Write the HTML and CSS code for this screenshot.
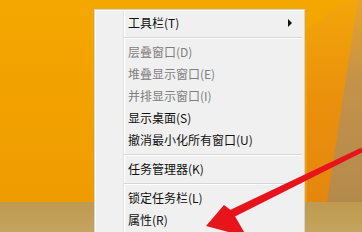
FILE: index.html
```html
<!DOCTYPE html>
<html>
<head>
<meta charset="utf-8">
<link rel="stylesheet" href="styles.css">
</head>
<body>
<div class="desktop">
  <svg class="decor" width="362" height="232" viewBox="0 0 362 232">
    <defs>
      <linearGradient id="dark" x1="0" y1="0" x2="0" y2="1">
        <stop offset="0" stop-color="#f3a60a"/>
        <stop offset="0.5" stop-color="#ea900c"/>
        <stop offset="1" stop-color="#e4870e"/>
      </linearGradient>
      <linearGradient id="tan" x1="0" y1="0" x2="0" y2="1">
        <stop offset="0" stop-color="#e7a228"/>
        <stop offset="0.4" stop-color="#c4924a"/>
        <stop offset="1" stop-color="#b48a4c"/>
      </linearGradient>
      <linearGradient id="bar" x1="0" y1="0" x2="0" y2="1">
        <stop offset="0" stop-color="#bf9a50"/>
        <stop offset="1" stop-color="#c4a45e"/>
      </linearGradient>
    </defs>
    <polygon points="307,30 345,0 362,0 362,202 307,202" fill="url(#dark)"/>
    <polygon points="358,0 362,0 362,202 327,202" fill="url(#tan)"/>
    <rect x="0" y="202" width="362" height="30" fill="url(#bar)"/>
  </svg>

  <div class="menu">
    <div class="item"><span>工具栏(T)</span><span class="sub"></span></div>
    <div class="sep"></div>
    <div class="item off">层叠窗口(D)</div>
    <div class="item off">堆叠显示窗口(E)</div>
    <div class="item off">并排显示窗口(I)</div>
    <div class="item">显示桌面(S)</div>
    <div class="item">撤消最小化所有窗口(U)</div>
    <div class="sep"></div>
    <div class="item">任务管理器(K)</div>
    <div class="sep"></div>
    <div class="item">锁定任务栏(L)</div>
    <div class="item">属性(R)</div>
  </div>

  <svg class="arrow" width="362" height="232" viewBox="0 0 362 232">
    <polygon fill="#e8141b" points="361,147.8 363,152 234,217 230,210"/>
    <polygon fill="#e8141b" points="206,226 224,205 232,211 236,218 247,237"/>
  </svg>
</div>
</body>
</html>
```
FILE: styles.css
```css
html, body {
  margin: 0;
  padding: 0;
}
body {
  width: 362px;
  height: 232px;
  overflow: hidden;
}
.desktop {
  position: relative;
  width: 362px;
  height: 232px;
  overflow: hidden;
  background: linear-gradient(180deg, #f4a700 0%, #f1a000 50%, #ee9a02 100%);
}
.decor {
  position: absolute;
  left: 0;
  top: 0;
}
.menu {
  position: absolute;
  left: 94px;
  top: 9px;
  width: 211px;
  height: 240px;
  padding-top: 2px;
  box-sizing: border-box;
  background: #f0f0f0;
  border: 1px solid #d4d4d4;
  box-shadow: inset 1px 1px 0 #fbfbfb;
  background-image: linear-gradient(90deg, transparent 28px, #e2e3e3 28px, #e2e3e3 29px, #ffffff 29px, #ffffff 30px, transparent 30px);
  font-family: "Noto Sans CJK SC", "Microsoft YaHei", sans-serif;
  font-size: 12px;
  color: #111;
}
.item {
  height: 22px;
  line-height: 22px;
  padding-left: 33px;
  padding-right: 12px;
  display: flex;
  justify-content: space-between;
  align-items: center;
  white-space: nowrap;
}
.item.off {
  color: #7f7f7f;
}
.sub {
  width: 0;
  height: 0;
  border-top: 4px solid transparent;
  border-bottom: 4px solid transparent;
  border-left: 4px solid #111;
}
.sep {
  height: 7px;
  margin-left: 29px;
  margin-right: 2px;
  box-sizing: border-box;
  background: linear-gradient(180deg, transparent 3px, #d7d7d7 3px, #d7d7d7 4px, #ffffff 4px, #ffffff 5px, transparent 5px);
}
.arrow {
  position: absolute;
  left: 0;
  top: 0;
}
```
